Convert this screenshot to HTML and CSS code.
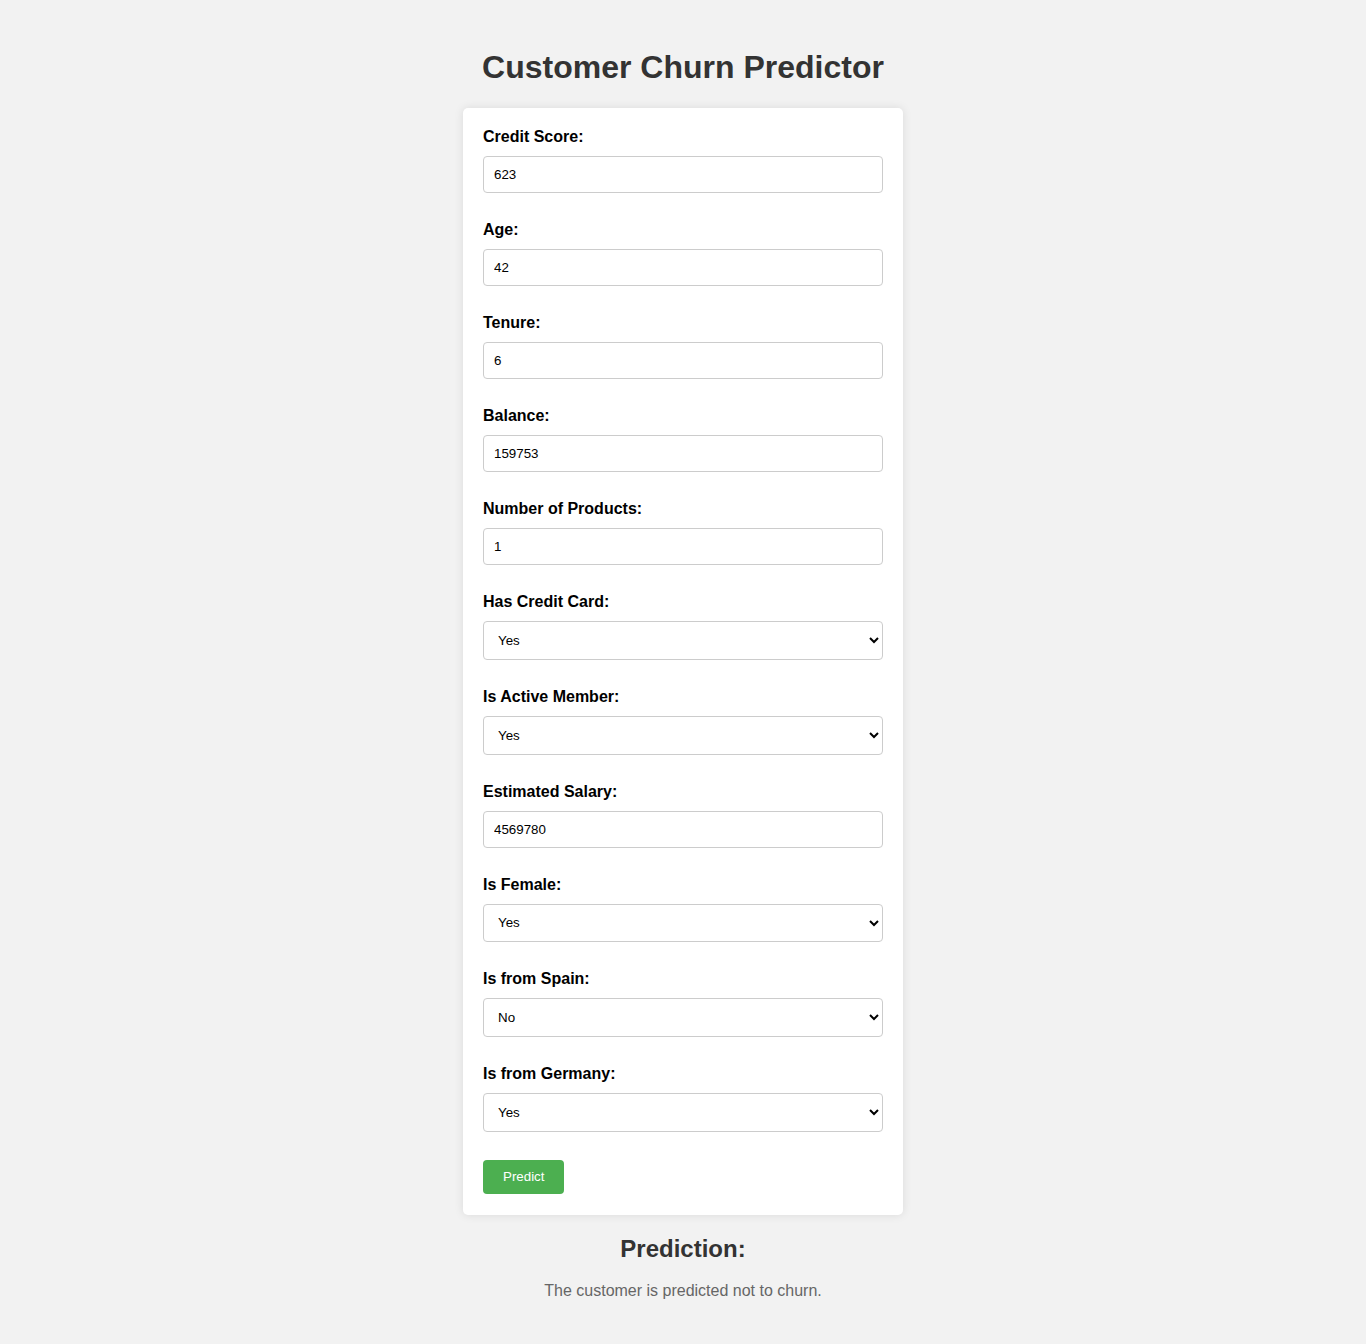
FILE: index.html
```html
<!DOCTYPE html>
<html>
<head>
<meta charset="utf-8">
<title>Customer Churn Predictor</title>
<link rel="stylesheet" href="styles.css">
</head>
<body>
<h1 class="title">Customer Churn Predictor</h1>
<form class="card">
  <label class="lbl">Credit Score:</label>
  <input class="field" type="text" value="623">
  <label class="lbl">Age:</label>
  <input class="field" type="text" value="42">
  <label class="lbl">Tenure:</label>
  <input class="field" type="text" value="6">
  <label class="lbl">Balance:</label>
  <input class="field" type="text" value="159753">
  <label class="lbl">Number of Products:</label>
  <input class="field" type="text" value="1">
  <label class="lbl">Has Credit Card:</label>
  <select class="field sel"><option selected>Yes</option><option>No</option></select>
  <label class="lbl">Is Active Member:</label>
  <select class="field sel"><option selected>Yes</option><option>No</option></select>
  <label class="lbl">Estimated Salary:</label>
  <input class="field" type="text" value="4569780">
  <label class="lbl">Is Female:</label>
  <select class="field sel"><option selected>Yes</option><option>No</option></select>
  <label class="lbl">Is from Spain:</label>
  <select class="field sel"><option>Yes</option><option selected>No</option></select>
  <label class="lbl">Is from Germany:</label>
  <select class="field sel"><option selected>Yes</option><option>No</option></select>
  <button class="btn" type="button">Predict</button>
</form>
<div class="result">
  <h2 class="result-title">Prediction:</h2>
  <p class="result-text">The customer is predicted not to churn.</p>
</div>
</body>
</html>
```
FILE: styles.css
```css
html, body {
  margin: 0;
  padding: 0;
}
body {
  background: #f2f2f2;
  font-family: "Liberation Sans", Arial, sans-serif;
  padding-top: 49px;
  padding-bottom: 40px;
}
.title {
  margin: 0 0 22px;
  text-align: center;
  font-size: 32px;
  line-height: 37px;
  font-weight: bold;
  color: #333;
}
.card {
  width: 400px;
  margin: 0 auto;
  background: #fff;
  padding: 20px 20px 21px;
  border-radius: 5px;
  box-shadow: 0 0 10px rgba(0,0,0,0.1);
  display: flex;
  flex-direction: column;
  align-items: flex-start;
}
.lbl {
  display: block;
  font-size: 16px;
  line-height: 18px;
  font-weight: bold;
  color: #000;
  margin: 0 0 10px;
}
.field {
  box-sizing: border-box;
  width: 400px;
  height: 37px;
  padding: 10px;
  border: 1px solid #ccc;
  border-radius: 4px;
  font-family: "Liberation Sans", Arial, sans-serif;
  font-size: 13.333px;
  color: #000;
  background: #fff;
  margin: 0 0 28px;
}
.sel {
  height: 38.75px;
  padding: 0 6px 0 10px;
}
.btn {
  margin: 0;
  background: #4caf50;
  color: #fff;
  border: none;
  border-radius: 4px;
  padding: 0 20px;
  height: 34px;
  font-family: "Liberation Sans", Arial, sans-serif;
  font-size: 13.333px;
  cursor: pointer;
}
.result {
  text-align: center;
  margin-top: 20px;
}
.result-title {
  margin: 0;
  font-size: 24px;
  line-height: 28px;
  color: #333;
}
.result-text {
  margin: 19px 0 0;
  font-size: 16px;
  line-height: 18px;
  color: #666;
}
```
